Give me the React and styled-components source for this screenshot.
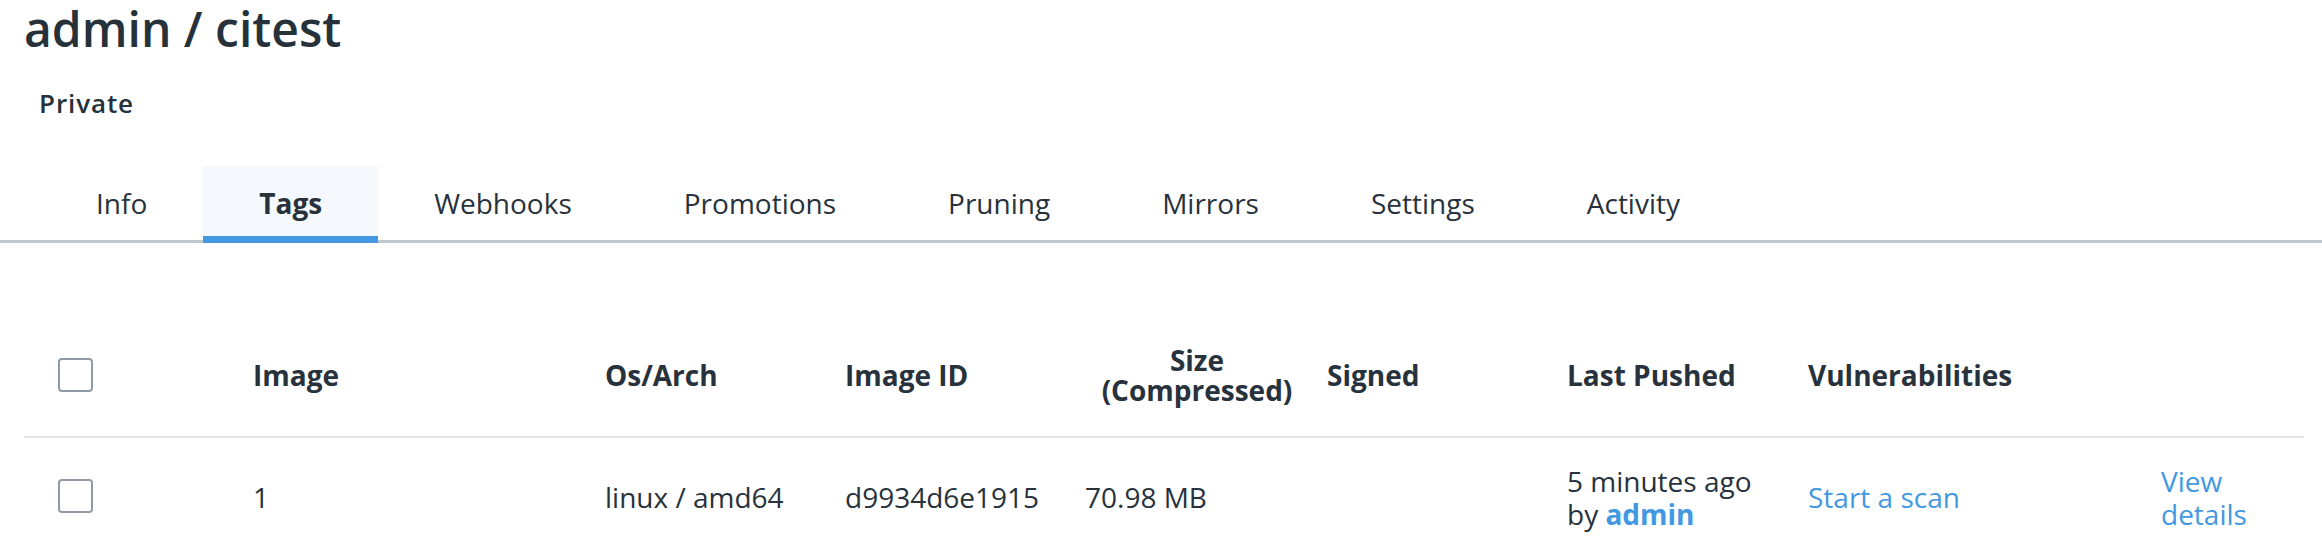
import React from "react";
import styled, { createGlobalStyle, css } from "styled-components";

const Global = createGlobalStyle`
  html, body { margin: 0; padding: 0; background: #fff; }
  body { font-family: "Open Sans", "Noto Sans", sans-serif; color: #27323c; }
`;

const Page = styled.div`
  display: flex;
  flex-direction: column;
  width: 2322px;
`;

const Title = styled.h1`
  margin: 0;
  padding-left: 24px;
  font-size: 48px;
  line-height: 57.6px;
  font-weight: 600;
  color: #26313a;
`;

const Visibility = styled.div`
  margin-top: 27px;
  padding-left: 39px;
  font-size: 26px;
  line-height: 36px;
  letter-spacing: 0.9px;
  font-weight: 600;
  color: #26313a;
`;

const TabBar = styled.nav`
  margin-top: 45px;
  display: flex;
  padding-left: 40px;
  border-bottom: 3px solid #c1c8cc;
`;

const Tab = styled.div`
  padding: 19px 56px 15px;
  margin-bottom: -3px;
  font-size: 28px;
  line-height: 36px;
  font-weight: ${(p) => (p.$active ? 700 : 400)};
  background: ${(p) => (p.$active ? "#f5f9fe" : "transparent")};
  border-bottom: 7px solid ${(p) => (p.$active ? "#4299e1" : "transparent")};
  color: #27323c;
`;

const Table = styled.div`
  margin: 71px 18px 0 24px;
  display: flex;
  flex-direction: column;
`;

const Cell = styled.div`
  padding: 0 6px 0 12px;
  text-align: ${(p) => (p.$center ? "center" : "left")};
`;

const Row = styled.div`
  display: grid;
  grid-template-columns: 217px 352px 240px 240px 242px 240px 241px 353px 156px;
  align-items: center;
  min-height: ${(p) => (p.$head ? "122px" : "117px")};
  border-bottom: ${(p) => (p.$head ? "2px solid #e1e5e9" : "none")};
  font-size: 28px;
  line-height: ${(p) => (p.$head ? "30px" : "33px")};
  font-weight: ${(p) => (p.$head ? 700 : 400)};
  ${(p) =>
    !p.$head &&
    css`
      & > ${Cell} {
        padding-top: 3px;
      }
    `}
`;

const CheckCell = styled.div`
  padding-left: 34px;
  display: flex;
  align-items: center;
`;

const Checkbox = styled.span`
  display: block;
  width: 35px;
  height: 34px;
  box-sizing: border-box;
  border: 2px solid #8e9ba6;
  border-radius: 4px;
  background: #fff;
`;

const Link = styled.a`
  color: #4299e1;
  text-decoration: none;
  font-weight: ${(p) => (p.$bold ? 700 : 400)};
`;

const tabs = ["Info", "Tags", "Webhooks", "Promotions", "Pruning", "Mirrors", "Settings", "Activity"];

export default function App() {
  return (
    <Page>
      <Global />
      <Title>admin / citest</Title>
      <Visibility>Private</Visibility>
      <TabBar>
        {tabs.map((t) => (
          <Tab key={t} $active={t === "Tags"}>{t}</Tab>
        ))}
      </TabBar>
      <Table>
        <Row $head>
          <CheckCell><Checkbox /></CheckCell>
          <Cell>Image</Cell>
          <Cell>Os/Arch</Cell>
          <Cell>Image ID</Cell>
          <Cell $center>Size (Compressed)</Cell>
          <Cell>Signed</Cell>
          <Cell>Last Pushed</Cell>
          <Cell>Vulnerabilities</Cell>
          <Cell />
        </Row>
        <Row>
          <CheckCell><Checkbox /></CheckCell>
          <Cell>1</Cell>
          <Cell>linux / amd64</Cell>
          <Cell>d9934d6e1915</Cell>
          <Cell>70.98 MB</Cell>
          <Cell />
          <Cell>
            5 minutes ago
            <br />
            by <Link $bold href="#">admin</Link>
          </Cell>
          <Cell><Link href="#">Start a scan</Link></Cell>
          <Cell><Link href="#">View details</Link></Cell>
        </Row>
      </Table>
    </Page>
  );
}
